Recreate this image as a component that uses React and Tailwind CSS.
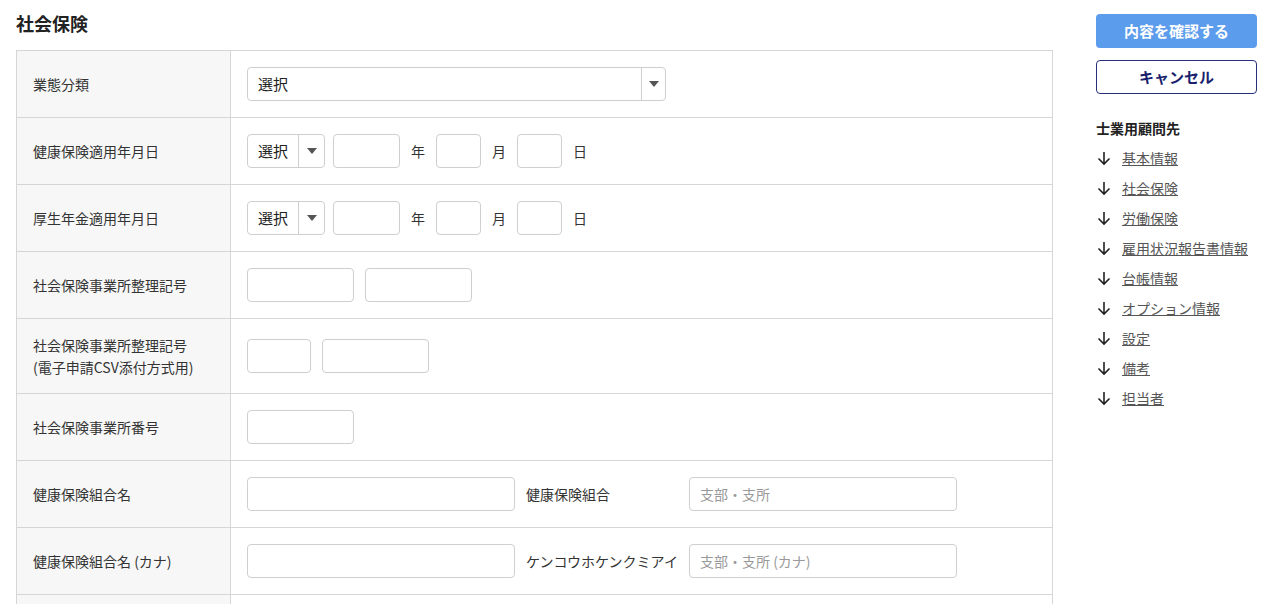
import React from 'react';

const F = { fontFamily: '"Noto Sans CJK JP", "Noto Sans", sans-serif' };

const Input = ({ w, ph }) => (
  <input placeholder={ph} className={`h-[34px] ${w} rounded border border-[#cfcfcf] bg-white px-2.5 text-sm placeholder:text-[#999] outline-none`} />
);

const Caret = () => (
  <svg width="10" height="6" viewBox="0 0 10 6"><path d="M0 0h10L5 6z" fill="#555" /></svg>
);

const SmallSelect = () => (
  <div className="flex h-[34px] w-[78px] items-center rounded border border-[#cfcfcf] bg-white">
    <span className="flex-1 pl-2.5 text-[15px] text-[#222]">選択</span>
    <span className="flex h-full w-[26px] items-center justify-center border-l border-[#cfcfcf]"><Caret /></span>
  </div>
);

const DateRow = () => (
  <div className="flex items-center gap-2">
    <SmallSelect />
    <Input w="w-[67px]" />
    <span className="mx-[3px] text-sm text-[#333]">年</span>
    <Input w="w-[45px]" />
    <span className="mx-[3px] text-sm text-[#333]">月</span>
    <Input w="w-[45px]" />
    <span className="mx-[3px] text-sm text-[#333]">日</span>
  </div>
);

const Row = ({ label, h = 'h-[67px]', children }) => (
  <div className={`flex ${h} border-b border-[#d6d6d6]`}>
    <div className="flex w-[214px] shrink-0 items-center border-r border-[#d6d6d6] bg-[#f7f7f7] pl-4 text-sm leading-[22px] text-[#333]">{label}</div>
    <div className="flex flex-1 items-center pl-4">{children}</div>
  </div>
);

const links = ['基本情報', '社会保険', '労働保険', '雇用状況報告書情報', '台帳情報', 'オプション情報', '設定', '備考', '担当者'];

export default function App() {
  return (
    <div style={F} className="flex h-[604px] w-[1280px] overflow-hidden bg-white">
      <div className="w-[1053px] shrink-0 pl-4">
        <h1 className="pt-[11px] pb-[15px] text-lg font-bold leading-6 text-[#222]">社会保険</h1>
        <div className="w-[1037px] border-l border-r border-t border-[#d6d6d6]">
          <Row label="業態分類">
            <div className="flex h-[34px] w-[419px] items-center rounded border border-[#cfcfcf]">
              <span className="flex-1 pl-2.5 text-[15px] text-[#222]">選択</span>
              <span className="flex h-full w-[24px] items-center justify-center border-l border-[#cfcfcf]"><Caret /></span>
            </div>
          </Row>
          <Row label="健康保険適用年月日"><DateRow /></Row>
          <Row label="厚生年金適用年月日"><DateRow /></Row>
          <Row label="社会保険事業所整理記号 ">
            <div className="flex gap-[11px]"><Input w="w-[107px]" /><Input w="w-[107px]" /></div>
          </Row>
          <Row label={<span>社会保険事業所整理記号<br />(電子申請CSV添付方式用)</span>} h="h-[75px]">
            <div className="flex gap-[11px]"><Input w="w-[64px]" /><Input w="w-[107px]" /></div>
          </Row>
          <Row label="社会保険事業所番号"><Input w="w-[107px]" /></Row>
          <Row label="健康保険組合名">
            <Input w="w-[268px]" />
            <span className="w-[174px] pl-[11px] text-sm text-[#333]">健康保険組合</span>
            <Input w="w-[268px]" ph="支部・支所" />
          </Row>
          <Row label="健康保険組合名 (カナ)">
            <Input w="w-[268px]" />
            <span className="w-[174px] pl-[11px] text-sm text-[#333]">ケンコウホケンクミアイ</span>
            <Input w="w-[268px]" ph="支部・支所 (カナ)" />
          </Row>
          <Row label="" />
        </div>
      </div>
      <div className="ml-[43px] w-[161px] pt-[14px]">
        <button className="h-[34px] w-full rounded bg-[#5c9cec] text-[15px] font-bold text-white">内容を確認する</button>
        <button className="mt-[12px] h-[34px] w-full rounded border border-[#2a2f7a] text-[15px] font-bold text-[#1a1f6e]">キャンセル</button>
        <div className="mt-[24px] text-sm font-bold text-[#222]">士業用顧問先</div>
        <ul className="mt-[5px]">
          {links.map((l) => (
            <li key={l} className="flex h-[30px] items-center gap-2.5 text-sm text-[#555]">
              <svg width="16" height="16" viewBox="0 0 16 16" fill="none" stroke="#222" strokeWidth="1.6"><path d="M8 2v12M2.5 8.5 8 14l5.5-5.5" /></svg>
              <a href="#" className="underline">{l}</a>
            </li>
          ))}
        </ul>
      </div>
    </div>
  );
}
